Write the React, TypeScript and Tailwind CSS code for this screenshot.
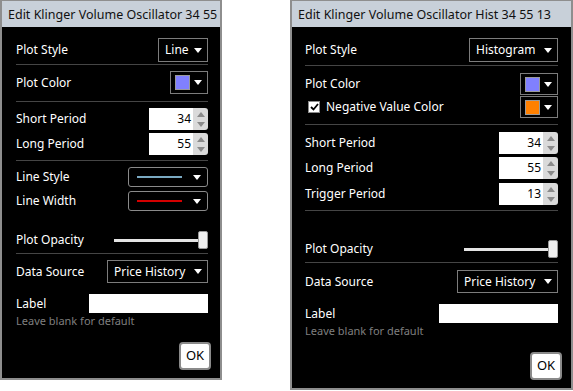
import React from "react";

const Caret = () => (
  <svg width="8" height="5" viewBox="0 0 8 5" className="shrink-0">
    <path d="M0 0h8L4 5z" fill="#ffffff" />
  </svg>
);

const Select = ({ value, className }: { value: string; className: string }) => (
  <div
    className={`flex h-[23px] items-center justify-between border border-[#7c7c7c] bg-black pl-[6px] pr-[5px] text-[12px] leading-[16px] text-white ${className}`}
  >
    <span>{value}</span>
    <Caret />
  </div>
);

const ColorSelect = ({ color, className = "" }: { color: string; className?: string }) => (
  <div
    className={`flex w-[38px] items-center justify-between border border-[#7c7c7c] bg-black pl-[4px] pr-[5px] ${className}`}
  >
    <span className="h-[15px] w-[15px] border border-[#9a9a9a]" style={{ backgroundColor: color }} />
    <Caret />
  </div>
);

const LineSelect = ({ color }: { color: string }) => (
  <div className="flex h-[20px] w-[80px] items-center justify-between rounded-[3px] border border-[#8a8a8a] bg-black pl-[8px] pr-[6px]">
    <span className="h-[2px] w-[45px]" style={{ backgroundColor: color }} />
    <Caret />
  </div>
);

const Spin = ({ value }: { value: string }) => (
  <div className="flex h-[22px] w-[59px] overflow-hidden rounded-r-[3px]">
    <div className="flex-1 bg-white pr-[2px] text-right text-[12px] leading-[22px] text-black">{value}</div>
    <div className="flex w-[15px] flex-col items-center justify-center gap-[5px] bg-[#dadada]">
      <svg width="8" height="5" viewBox="0 0 8 5">
        <path d="M0 5h8L4 0z" fill="#8a8a8a" />
      </svg>
      <svg width="8" height="5" viewBox="0 0 8 5">
        <path d="M0 0h8L4 5z" fill="#8a8a8a" />
      </svg>
    </div>
  </div>
);

const Slider = ({ className }: { className: string }) => (
  <div className={`flex items-center ${className}`}>
    <div className="h-[3px] flex-1 bg-[#e4e4e4]" />
    <div className="h-[18px] w-[10px] rounded-[2px] border border-[#9a9a9a] bg-[#f0f0f0]" />
  </div>
);

const Sep = ({ className = "" }: { className?: string }) => <div className={`h-px shrink-0 bg-[#454545] ${className}`} />;

const Row = ({ label, children, className = "" }: { label: React.ReactNode; children?: React.ReactNode; className?: string }) => (
  <div className={`flex items-center justify-between ${className}`}>
    <span className="text-[12px] leading-[16px] text-white">{label}</span>
    {children}
  </div>
);

const OkButton = () => (
  <div className="flex h-[28px] w-[32px] items-center justify-center rounded-[4px] border-2 border-[#8a8a8a] bg-white text-[13px] text-black">
    OK
  </div>
);

const Dialog = ({ title, className, children }: { title: string; className: string; children: React.ReactNode }) => (
  <div className={`flex flex-col border-x-2 border-b-2 border-t border-[#8e8e8e] bg-black ${className}`}>
    <div className="h-[26px] shrink-0 whitespace-nowrap bg-[#c8d0d9] pl-[6px] text-[12.5px] leading-[27px] text-[#111]">
      {title}
    </div>
    {children}
  </div>
);

export default function App() {
  return (
    <div className="flex h-[391px] w-[573px] items-start bg-white font-['Noto_Sans',sans-serif]">
      {/* Klinger Volume Oscillator */}
      <Dialog title="Edit Klinger Volume Oscillator 34 55" className="h-[380px] w-[222px]">
        <div className="flex flex-1 flex-col pl-[14px] pr-[12px] pt-[11px]">
          <Row label="Plot Style">
            <Select value="Line" className="h-[24px] w-[50px]" />
          </Row>
          <Sep className="mt-[2px]" />
          <Row label="Plot Color" className="mt-[6px]">
            <ColorSelect color="#8080ff" className="h-[23px]" />
          </Row>
          <Sep className="mt-[7px]" />
          <Row label="Short Period" className="mt-[6px]">
            <Spin value="34" />
          </Row>
          <Row label="Long Period" className="mt-[3px]">
            <Spin value="55" />
          </Row>
          <Sep className="mt-[5px]" />
          <Row label="Line Style" className="mt-[6px]">
            <LineSelect color="#7aa9c2" />
          </Row>
          <Row label="Line Width" className="mt-[4px]">
            <LineSelect color="#d40000" />
          </Row>
          <Row label="Plot Opacity" className="mt-[20px]">
            <Slider className="w-[94px]" />
          </Row>
          <Sep className="mt-[4px]" />
          <Row label="Data Source" className="mt-[6px]">
            <Select value="Price History" className="w-[101px]" />
          </Row>
          <Row label="Label" className="mt-[11px]">
            <div className="h-[19px] w-[119px] bg-white" />
          </Row>
          <span className="text-[11px] leading-[15px] text-[#7f7f7f]">Leave blank for default</span>
          <div className="mt-[14px] flex justify-end">
            <div className="mr-[-3px]">
              <OkButton />
            </div>
          </div>
        </div>
      </Dialog>

      {/* Klinger Volume Oscillator Hist */}
      <Dialog title="Edit Klinger Volume Oscillator Hist 34 55 13" className="ml-[68px] h-[390px] w-[283px]">
        <div className="flex flex-1 flex-col pl-[13px] pr-[13px] pt-[11px]">
          <Row label="Plot Style">
            <Select value="Histogram" className="h-[24px] w-[89px]" />
          </Row>
          <Sep className="mt-[3px]" />
          <Row label="Plot Color" className="mt-[7px]">
            <ColorSelect color="#8080ff" className="h-[22px]" />
          </Row>
          <Row
            label={
              <span className="flex items-center gap-[6px] pl-[3px]">
                <span className="flex h-[12px] w-[12px] items-center justify-center border border-[#8a8a8a] bg-white">
                  <svg width="9" height="8" viewBox="0 0 9 8">
                    <path d="M1 4l2.5 2.5L8 1" stroke="#000" strokeWidth="1.8" fill="none" />
                  </svg>
                </span>
                Negative Value Color
              </span>
            }
            className="mt-[1px]"
          >
            <ColorSelect color="#ff8000" className="h-[22px]" />
          </Row>
          <Sep className="mt-[6px]" />
          <Row label="Short Period" className="mt-[7px]">
            <Spin value="34" />
          </Row>
          <Row label="Long Period" className="mt-[3px]">
            <Spin value="55" />
          </Row>
          <Row label="Trigger Period" className="mt-[4px]">
            <Spin value="13" />
          </Row>
          <Sep className="mt-[5px]" />
          <Row label="Plot Opacity" className="mt-[29px]">
            <Slider className="w-[94px]" />
          </Row>
          <Sep className="mt-[4px]" />
          <Row label="Data Source" className="mt-[7px]">
            <Select value="Price History" className="w-[101px]" />
          </Row>
          <Row label="Label" className="mt-[11px]">
            <div className="h-[19px] w-[119px] bg-white" />
          </Row>
          <span className="text-[11px] leading-[15px] text-[#7f7f7f]">Leave blank for default</span>
          <div className="mt-[14px] flex justify-end">
            <div className="mr-[-4px]">
              <OkButton />
            </div>
          </div>
        </div>
      </Dialog>
    </div>
  );
}
